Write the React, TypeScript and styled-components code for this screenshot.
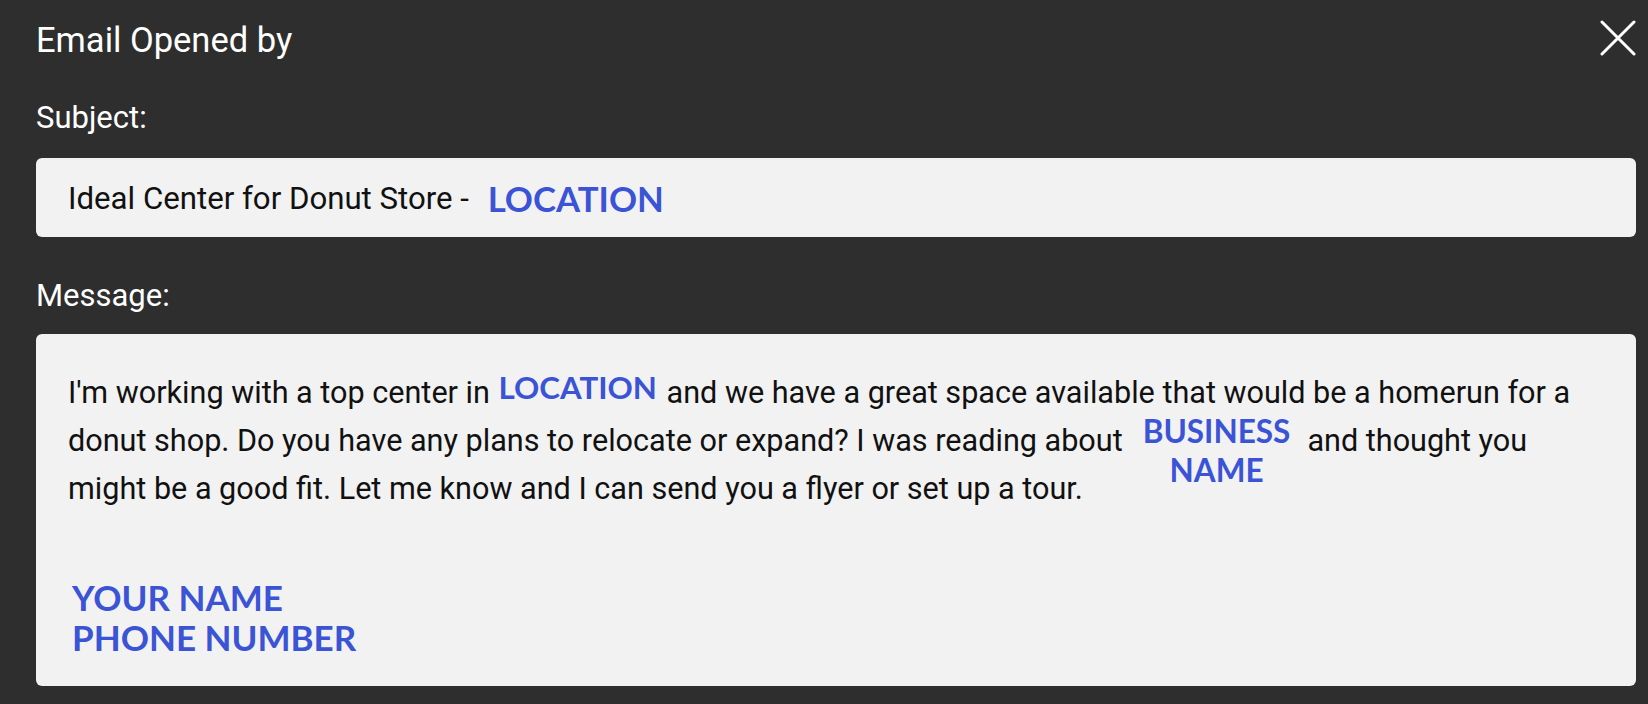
import React from "react";
import styled, { createGlobalStyle } from "styled-components";

const Global = createGlobalStyle`
  html, body {
    margin: 0;
    padding: 0;
    background: #2e2e2e;
  }
  body {
    font-family: Roboto, "Liberation Sans", sans-serif;
  }
`;

const Panel = styled.div`
  width: 1648px;
  height: 704px;
  box-sizing: border-box;
  padding: 20px 12px 0 36px;
  background: #2e2e2e;
  display: flex;
  flex-direction: column;
  overflow: hidden;
`;

const Header = styled.div`
  display: flex;
  justify-content: space-between;
  align-items: flex-start;
  height: 40px;
`;

const Title = styled.h1`
  margin: 0;
  font-family: Roboto, sans-serif;
  font-weight: 400;
  font-size: 34.5px;
  line-height: 40px;
  color: #ffffff;
`;

const CloseButton = styled.button`
  width: 36px;
  height: 36px;
  padding: 0;
  border: none;
  background: transparent;
  cursor: pointer;
  display: flex;
`;

const Label = styled.div<{ $top: number; $bottom: number }>`
  margin-top: ${(p) => p.$top}px;
  margin-bottom: ${(p) => p.$bottom}px;
  font-family: Roboto, sans-serif;
  font-size: 31px;
  line-height: 36px;
  color: #ffffff;
`;

const Field = styled.div`
  background: #f2f2f2;
  border-radius: 6px;
  box-sizing: border-box;
  color: #111111;
  font-family: Roboto, sans-serif;
`;

const SubjectField = styled(Field)`
  height: 79px;
  padding: 2px 32px 0 32px;
  font-size: 31.2px;
  line-height: 77px;
  white-space: nowrap;
`;

const MessageField = styled(Field)`
  height: 352px;
  padding: 35px 32px 28px 32px;
  font-size: 30.6px;
  display: flex;
  flex-direction: column;
  gap: 64px;
`;

const Paragraph = styled.p`
  margin: 0;
  line-height: 48px;
`;

const Line = styled.span`
  display: block;
  white-space: nowrap;
`;

const Tag = styled.span<{ $size: number; $shift: number; $gapL: number; $gapR: number }>`
  font-family: Lato, "Open Sans", sans-serif;
  font-weight: 700;
  color: #3b54d6;
  font-size: ${(p) => p.$size}px;
  line-height: 1;
  vertical-align: ${(p) => p.$shift}px;
  margin-left: ${(p) => p.$gapL}px;
  margin-right: ${(p) => p.$gapR}px;
`;

const StackTag = styled.span`
  display: inline-block;
  vertical-align: top;
  height: 48px;
  margin: 0 17px 0 20px;
  overflow: visible;
`;

const StackText = styled.span`
  display: block;
  margin-top: -5px;
  font-family: Lato, "Open Sans", sans-serif;
  font-weight: 700;
  font-size: 31.5px;
  line-height: 39px;
  color: #3b54d6;
  text-align: center;
`;

const Signature = styled.div`
  font-family: Lato, "Open Sans", sans-serif;
  font-weight: 700;
  font-size: 35px;
  line-height: 40px;
  color: #3b54d6;
  padding-left: 4px;
`;

const CloseIcon = () => (
  <svg width="36" height="36" viewBox="0 0 36 36" fill="none">
    <path d="M2 2 L34 34 M34 2 L2 34" stroke="#ffffff" strokeWidth="3" strokeLinecap="round" />
  </svg>
);

export default function App() {
  return (
    <>
      <Global />
      <Panel>
        <Header>
          <Title>Email Opened by</Title>
          <CloseButton aria-label="Close">
            <CloseIcon />
          </CloseButton>
        </Header>

        <Label $top={40} $bottom={22}>Subject:</Label>
        <SubjectField>
          Ideal Center for Donut Store -{" "}
          <Tag $size={34.8} $shift={-3} $gapL={11} $gapR={0}>LOCATION</Tag>
        </SubjectField>

        <Label $top={41} $bottom={20}>Message:</Label>
        <MessageField>
          <Paragraph>
            <Line>
              I'm working with a top center in{" "}
              <Tag $size={31.3} $shift={4} $gapL={1} $gapR={2}>LOCATION</Tag> and we have a
              great space available that would be a homerun for a
            </Line>
            <Line>
              donut shop. Do you have any plans to relocate or expand? I was reading about
              <StackTag>
                <StackText>
                  BUSINESS
                  <br />
                  NAME
                </StackText>
              </StackTag>
              and thought you
            </Line>
            <Line>might be a good fit. Let me know and I can send you a flyer or set up a tour.</Line>
          </Paragraph>
          <Signature>
            YOUR NAME
            <br />
            PHONE NUMBER
          </Signature>
        </MessageField>
      </Panel>
    </>
  );
}
